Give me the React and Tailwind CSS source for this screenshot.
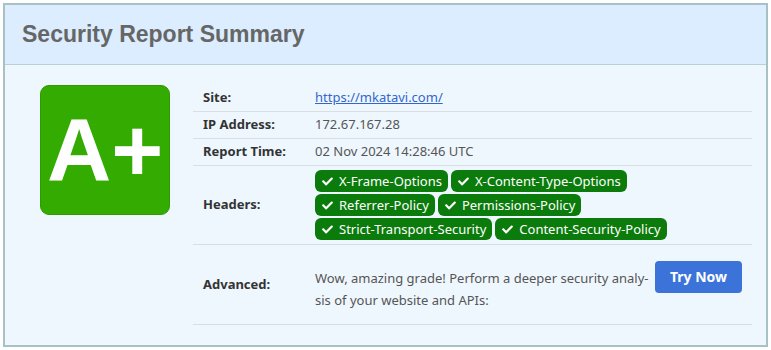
import { FaCheck } from 'react-icons/fa';

const headers = [
    ['X-Frame-Options', 'X-Content-Type-Options'],
    ['Referrer-Policy', 'Permissions-Policy'],
    ['Strict-Transport-Security', 'Content-Security-Policy'],
];

const Badge = ({ name }) => (
    <span className="inline-flex items-center gap-[6px] h-[22px] pl-[7px] pr-[6px] rounded-[6px] bg-[#0b7b0b] text-white text-[13px] leading-none">
        <FaCheck size={11} />
        {name}
    </span>
);

const Row = ({ label, children, className = '' }) => (
    <div className={`flex items-center border-b border-[#d9dee2] ${className}`}>
        <div className="w-[122px] shrink-0 pl-[10px] font-bold text-[#333]">{label}</div>
        <div className="flex-1 text-[#555]">{children}</div>
    </div>
);

export default function App() {
    return (
        <div className="p-[3px] bg-white" style={{ fontFamily: '"Noto Sans", "Open Sans", sans-serif' }}>
            <div className="h-[344px] border-2 border-[#a7c1c4] bg-[#eff7fe] flex flex-col">
                {/* Header */}
                <div className="h-[60px] shrink-0 bg-[#dbedfe] border-b border-[#b9d1d6] flex items-center pl-[17px]">
                    <h1 className="text-[23px] font-bold text-[#666]" style={{ fontFamily: '"Liberation Sans", Arial, sans-serif' }}>
                        Security Report Summary
                    </h1>
                </div>

                {/* Body */}
                <div className="flex pt-[20px] pl-[35px] pr-[14px] gap-[23px] text-[13px]">
                    <div className="w-[130px] h-[130px] shrink-0 rounded-[9px] bg-[#33ab00] border border-[#2e9c00] flex items-center justify-center">
                        <span className="text-white font-bold text-[89px] leading-none" style={{ fontFamily: '"Liberation Sans", Arial, sans-serif' }}>
                            A+
                        </span>
                    </div>

                    <div className="flex-1">
                        <Row label="Site:" className="h-[27px]">
                            <a href="#" className="text-[#3366cc] underline">https://mkatavi.com/</a>
                        </Row>
                        <Row label="IP Address:" className="h-[27px]">172.67.167.28</Row>
                        <Row label="Report Time:" className="h-[27px]">02 Nov 2024 14:28:46 UTC</Row>
                        <Row label="Headers:" className="h-[79px]">
                            <div className="flex flex-col gap-[2px]">
                                {headers.map((pair, i) => (
                                    <div key={i} className="flex gap-[3px]">
                                        {pair.map((h) => <Badge key={h} name={h} />)}
                                    </div>
                                ))}
                            </div>
                        </Row>
                        <Row label="Advanced:" className="h-[80px]">
                            <div className="flex items-start gap-[6px] mt-[8px]">
                                <p className="w-[334px] leading-[22px]">
                                    Wow, amazing grade! Perform a deeper security analy&shy;sis of your website and APIs:
                                </p>
                                <button className="-mt-[6px] w-[87px] h-[32px] rounded-[4px] bg-[#3b73d9] text-white font-bold text-[14px]">
                                    Try Now
                                </button>
                            </div>
                        </Row>
                    </div>
                </div>
            </div>
        </div>
    );
}
